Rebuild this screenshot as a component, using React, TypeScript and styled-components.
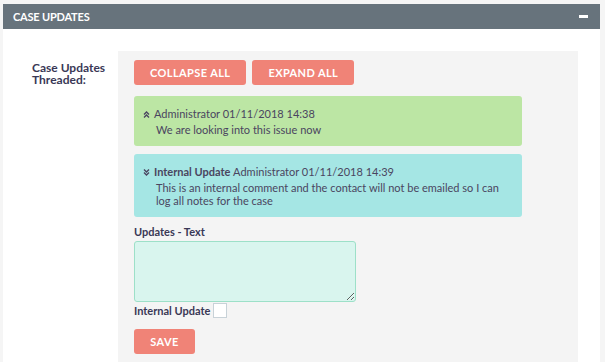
import React from "react";
import styled, { createGlobalStyle } from "styled-components";

const GlobalStyle = createGlobalStyle`
    html, body {
        margin: 0;
        padding: 0;
        background: #f5f5f5;
        font-family: Lato, "Open Sans", sans-serif;
    }
`;

interface Update {
    internal: boolean;
    author: string;
    date: string;
    text: string;
}

const updates: Update[] = [
    {
        internal: false,
        author: "Administrator",
        date: "01/11/2018 14:38",
        text: "We are looking into this issue now",
    },
    {
        internal: true,
        author: "Administrator",
        date: "01/11/2018 14:39",
        text: "This is an internal comment and the contact will not be emailed so I can log all notes for the case",
    },
];

const Chevrons: React.FC<{ up: boolean }> = ({ up }) => (
    <svg width="7" height="7" viewBox="0 0 7 7" style={{ transform: up ? "none" : "rotate(180deg)" }}>
        <path d="M1 3.5 L3.5 1 L6 3.5 M1 6.5 L3.5 4 L6 6.5" fill="none" stroke="#4a4560" strokeWidth="1.4" />
    </svg>
);

const App: React.FC = () => {
    return (
        <Page>
            <GlobalStyle />
            <Panel>
                <PanelHeader>
                    <span>Case Updates</span>
                    <Minus />
                </PanelHeader>
                <PanelBody>
                    <FieldLabel>Case Updates Threaded:</FieldLabel>
                    <FieldBox>
                        <ButtonRow>
                            <Button>Collapse All</Button>
                            <Button>Expand All</Button>
                        </ButtonRow>
                        {updates.map((u, i) => (
                            <UpdateBox key={i} internal={u.internal}>
                                <UpdateHead>
                                    <Chevrons up={!u.internal} />
                                    <span>
                                        {u.internal && <b>Internal Update </b>}
                                        {u.author} {u.date}
                                    </span>
                                </UpdateHead>
                                <UpdateText>{u.text}</UpdateText>
                            </UpdateBox>
                        ))}
                        <SubLabel>Updates - Text</SubLabel>
                        <TextArea />
                        <CheckRow>
                            <SubLabel>Internal Update</SubLabel>
                            <CheckBox />
                        </CheckRow>
                        <SaveButton>Save</SaveButton>
                    </FieldBox>
                </PanelBody>
            </Panel>
        </Page>
    );
};

const Page = styled.div`
    padding: 4px 5px 0 3px;
    height: 358px;
    overflow: hidden;
`;

const Panel = styled.div`
    background: #fff;
    height: 100%;
`;

const PanelHeader = styled.div`
    height: 25px;
    background: #67737c;
    color: #fff;
    display: flex;
    align-items: center;
    justify-content: space-between;
    padding: 0 12px 0 10px;
    font-size: 11px;
    font-weight: bold;
    text-transform: uppercase;
    letter-spacing: -0.2px;
`;

const Minus = styled.div`
    width: 9px;
    height: 3px;
    background: #fff;
`;

const PanelBody = styled.div`
    display: flex;
    padding: 22px 22px 0 29px;
`;

const FieldLabel = styled.div`
    width: 86px;
    margin-top: 11px;
    font-size: 12px;
    line-height: 12px;
    font-weight: bold;
    color: #3a3856;
`;

const FieldBox = styled.div`
    flex: 1;
    background: #f4f4f4;
    padding: 9px 16px 20px;
    display: flex;
    flex-direction: column;
    align-items: flex-start;
`;

const ButtonRow = styled.div`
    display: flex;
    gap: 6px;
    margin-bottom: 11px;
`;

const Button = styled.button`
    height: 25px;
    padding: 0 16px;
    border: none;
    border-radius: 3px;
    background: #f08377;
    color: #fff;
    font-family: Lato, sans-serif;
    font-size: 11px;
    font-weight: bold;
    letter-spacing: 0.4px;
    text-transform: uppercase;
`;

const SaveButton = styled(Button)`
    width: 61px;
    margin-top: 11px;
`;

const UpdateBox = styled.div<{ internal: boolean }>`
    width: 388px;
    box-sizing: border-box;
    background: ${(p) => (p.internal ? "#a5e6e4" : "#bce6a4")};
    border-radius: 3px;
    padding: 10px 10px 10px 9px;
    margin-bottom: 8px;
    color: #4a4560;
    font-size: 11px;
`;

const UpdateHead = styled.div`
    display: flex;
    align-items: center;
    gap: 4px;
    line-height: 16px;

    b {
        font-weight: bold;
    }
`;

const UpdateText = styled.div`
    margin: 1px 0 0 13px;
    line-height: 13px;
`;

const SubLabel = styled.div`
    font-size: 11px;
    font-weight: bold;
    color: #3a3856;
    line-height: 14px;
`;

const TextArea = styled.textarea`
    width: 222px;
    height: 61px;
    box-sizing: border-box;
    margin-top: 2px;
    background: #d9f5ee;
    border: 1px solid #9de0c8;
    border-radius: 3px;
    resize: vertical;
    outline: none;
`;

const CheckRow = styled.div`
    display: flex;
    align-items: center;
    gap: 3px;
    margin-top: 1px;
`;

const CheckBox = styled.div`
    width: 12px;
    height: 13px;
    background: #fff;
    border: 1px solid #c8d2d8;
`;

export default App;
